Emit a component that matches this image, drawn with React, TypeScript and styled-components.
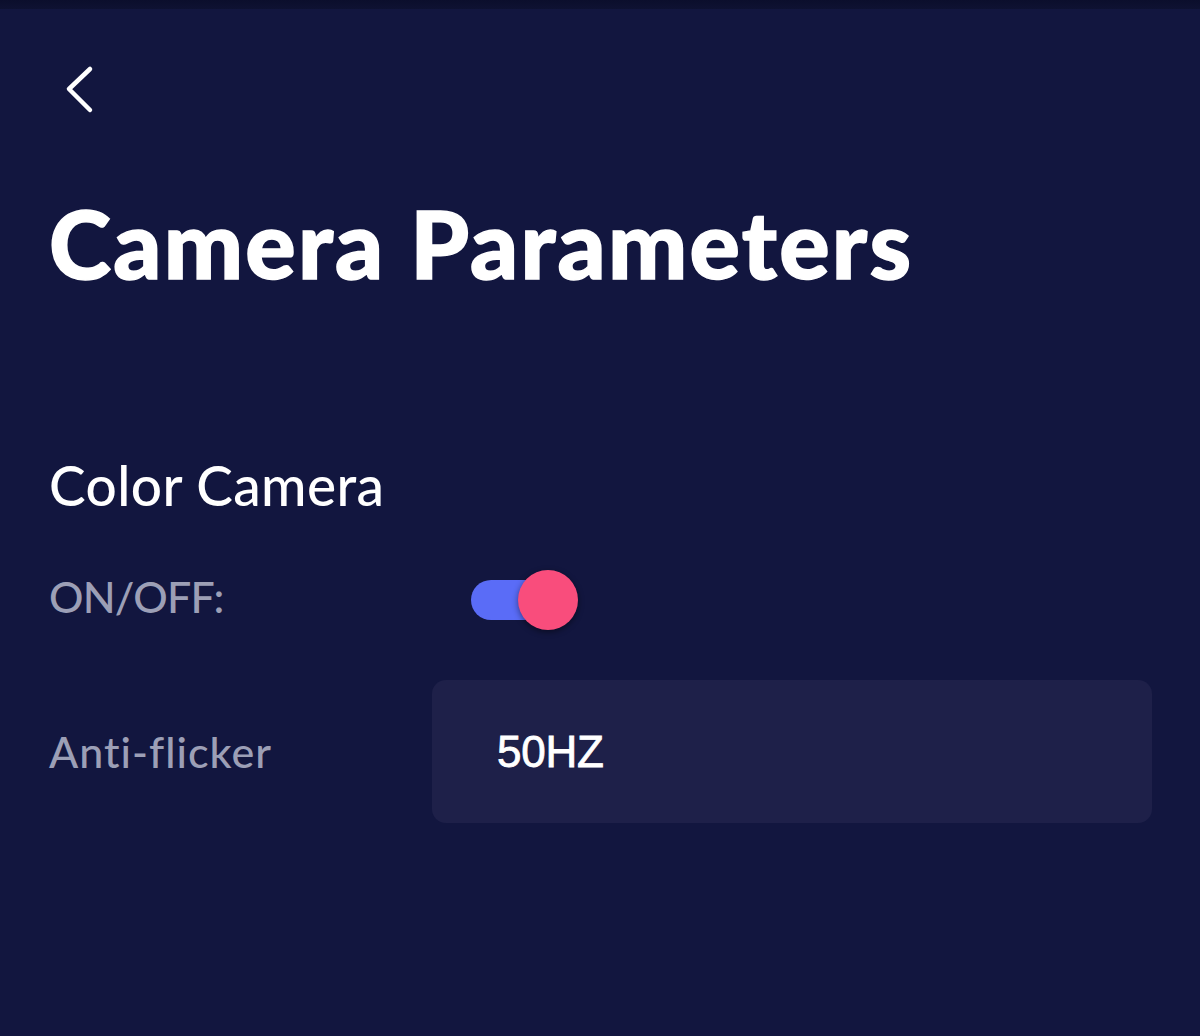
import React, { useState } from 'react';
import styled, { createGlobalStyle } from 'styled-components';

const GlobalStyle = createGlobalStyle`
  html, body {
    margin: 0;
    padding: 0;
    background: #12163f;
  }
  body {
    font-family: Lato, "Noto Sans", sans-serif;
  }
`;

const Chevron = () => (
  <svg width="40" height="56" viewBox="0 0 40 56" fill="none">
    <path
      d="M29 7 L8 27 L29 48"
      stroke="#ffffff"
      strokeWidth="4.5"
      strokeLinecap="round"
      strokeLinejoin="round"
    />
  </svg>
);

export default function App() {
  const [on, setOn] = useState(true);

  return (
    <>
      <GlobalStyle />
      <PageS>
        <StatusBarS />
        <ContentS>
          <BackBtnS aria-label="back">
            <Chevron />
          </BackBtnS>
          <TitleS>Camera Parameters</TitleS>
          <SectionTitleS>Color Camera</SectionTitleS>
          <RowS>
            <LabelS>ON/OFF:</LabelS>
            <SwitchS $on={on} onClick={() => setOn(!on)}>
              <KnobS $on={on} />
            </SwitchS>
          </RowS>
          <SelectRowS>
            <LabelS $wide>Anti-flicker</LabelS>
            <ValueBoxS>
              <ValueS>50HZ</ValueS>
            </ValueBoxS>
          </SelectRowS>
        </ContentS>
      </PageS>
    </>
  );
}

const PageS = styled.div`
  width: 1200px;
  height: 1036px;
  background: #12163f;
  overflow: hidden;
`;

const StatusBarS = styled.div`
  height: 9px;
  background: linear-gradient(#0b0e2c, #0e1232);
`;

const ContentS = styled.div`
  display: flex;
  flex-direction: column;
  padding: 0 48px 0 49px;
`;

const BackBtnS = styled.button`
  display: flex;
  align-items: center;
  justify-content: center;
  width: 40px;
  height: 56px;
  margin: 53px 0 0 12px;
  padding: 0;
  border: none;
  background: transparent;
  cursor: pointer;
`;

const TitleS = styled.h1`
  margin: 70px 0 0;
  font-family: Lato, sans-serif;
  font-weight: 900;
  font-size: 94px;
  line-height: 110px;
  letter-spacing: 2.3px;
  color: #ffffff;
  -webkit-text-stroke: 1.5px #ffffff;
`;

const SectionTitleS = styled.h2`
  margin: 154px 0 0;
  font-family: Lato, sans-serif;
  font-weight: 500;
  font-size: 55px;
  line-height: 66px;
  letter-spacing: 0.4px;
  color: #ffffff;
`;

const RowS = styled.div`
  display: grid;
  grid-template-columns: 422px 1fr;
  align-items: center;
  height: 60px;
  margin-top: 52px;
`;

const SelectRowS = styled(RowS)`
  height: 143px;
  margin-top: 50px;
`;

const LabelS = styled.span<{ $wide?: boolean }>`
  margin-top: ${(p) => (p.$wide ? '0' : '-7px')};
  font-family: Lato, sans-serif;
  font-weight: 500;
  font-size: 43px;
  letter-spacing: ${(p) => (p.$wide ? '1px' : '-0.8px')};
  color: #9c9fb6;
`;

const SwitchS = styled.button<{ $on: boolean }>`
  position: relative;
  width: 90px;
  height: 40px;
  margin-left: 0;
  padding: 0;
  border: none;
  border-radius: 20px;
  background: ${(p) => (p.$on ? '#5a6cf7' : '#3a3d66')};
  cursor: pointer;
`;

const KnobS = styled.span<{ $on: boolean }>`
  position: absolute;
  top: -10px;
  left: ${(p) => (p.$on ? '47px' : '-10px')};
  width: 60px;
  height: 60px;
  border-radius: 50%;
  background: #f94d7c;
  box-shadow: 0 2px 6px rgba(0, 0, 0, 0.45);
`;

const ValueBoxS = styled.div`
  display: flex;
  align-items: center;
  height: 143px;
  padding-left: 65px;
  margin-left: -39px;
  border-radius: 14px;
  background: #1e2049;
`;

const ValueS = styled.span`
  font-family: "Liberation Sans", Arial, sans-serif;
  font-weight: 400;
  font-size: 44px;
  letter-spacing: -0.2px;
  color: #ffffff;
  -webkit-text-stroke: 0.8px #ffffff;
`;
